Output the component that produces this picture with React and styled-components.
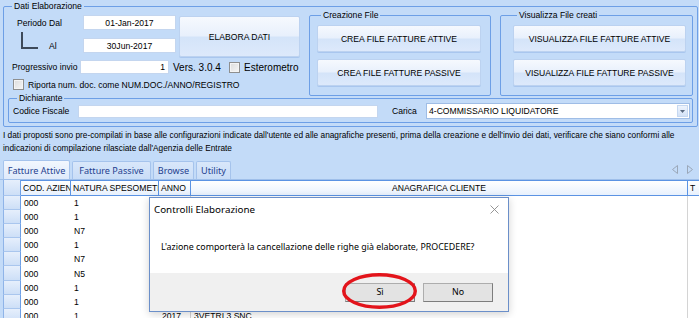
import React from "react";
import styled, { createGlobalStyle } from "styled-components";

const GlobalStyle = createGlobalStyle`
  html, body {
    margin: 0;
    padding: 0;
    background: #c3dbf8;
  }
  * {
    box-sizing: border-box;
  }
`;

const Screen = styled.div`
  position: relative;
  width: 699px;
  height: 318px;
  overflow: hidden;
  background: #c3dbf8;
  font-family: "Liberation Sans", Arial, sans-serif;
  font-size: 8.6px;
  color: #000;
  display: flex;
  flex-direction: column;
`;

const Group = styled.fieldset`
  margin: ${({ $margin }) => $margin || 0};
  padding: ${({ $pad }) => $pad || 0};
  border: 1px solid #6d9fe6;
  border-radius: 2px;
  min-width: 0;
  width: ${({ $width }) => ($width ? `${$width}px` : "auto")};
  flex: ${({ $grow }) => ($grow ? 1 : "none")};
`;

const Legend = styled.legend`
  margin-left: 4px;
  padding: 0 2px;
  font-size: 8.6px;
  line-height: ${({ $lh }) => $lh || 9}px;
`;

const TopRow = styled.div`
  display: flex;
  align-items: flex-start;
`;

const LeftPane = styled.div`
  width: 301px;
  padding-top: 4px;
  display: flex;
  flex-direction: column;
`;

const PeriodGrid = styled.div`
  display: grid;
  grid-template-columns: 72px 93px 121px;
  grid-template-rows: 15px 15px;
  column-gap: 3px;
  row-gap: 8px;
`;

const FieldLabel = styled.div`
  display: flex;
  align-items: ${({ $align }) => $align || "center"};
  padding-left: ${({ $indent }) => $indent || 0}px;
  width: ${({ $width }) => ($width ? `${$width}px` : "auto")};
  flex: none;
  white-space: nowrap;
`;

const Elbow = styled.div`
  width: 17px;
  height: 17px;
  margin-left: 13px;
  margin-bottom: 4px;
  border-left: 2px solid #3e4a5a;
  border-bottom: 2px solid #3e4a5a;
  flex: none;
`;

const AlText = styled.span`
  align-self: center;
  margin-left: 11px;
`;

const TextBox = styled.div`
  height: ${({ $h }) => $h || 15}px;
  width: ${({ $width }) => ($width ? `${$width}px` : "auto")};
  flex: ${({ $grow }) => ($grow ? 1 : "none")};
  background: #fff;
  border: 1px solid #c4d6ef;
  display: flex;
  align-items: center;
  justify-content: ${({ $justify }) => $justify || "center"};
  padding: 0 3px;
  white-space: nowrap;
  overflow: hidden;
`;

const BlueButton = styled.div`
  display: flex;
  align-items: center;
  justify-content: center;
  height: ${({ $h }) => $h}px;
  border: 1px solid #bcd2f0;
  border-radius: 2px;
  background: linear-gradient(
    to bottom,
    #f6f9fe 0%,
    #e8f0fc 48%,
    #d4e4f9 52%,
    #dde9fb 100%
  );
  box-shadow: 0 1px 0 rgba(120, 160, 220, 0.35);
  white-space: nowrap;
  font-size: 8.6px;
`;

const ElaboraButton = styled(BlueButton)`
  grid-column: 3;
  grid-row: 1 / span 2;
  align-self: start;
  margin-top: 1px;
`;

const Line = styled.div`
  display: flex;
  align-items: center;
  height: ${({ $h }) => $h}px;
  margin-top: ${({ $top }) => $top || 0}px;
  padding-left: ${({ $indent }) => $indent || 0}px;
`;

const BigText = styled.span`
  font-size: 10px;
  margin-left: ${({ $left }) => $left || 0}px;
  width: ${({ $width }) => ($width ? `${$width}px` : "auto")};
  white-space: nowrap;
  flex: none;
`;

const Check = styled.span`
  display: inline-block;
  width: 11px;
  height: 11px;
  flex: none;
  border: 1px solid #8e8f8f;
  background: linear-gradient(to bottom right, #dcdcdc, #f6f6f6);
  box-shadow: inset 0 0 0 1px #f4f4f4;
`;

const CheckText = styled.span`
  margin-left: 4px;
  white-space: nowrap;
`;

const ButtonStack = styled.div`
  display: flex;
  flex-direction: column;
  gap: 7px;
`;

const DichRow = styled.div`
  display: flex;
  align-items: center;
  height: 16px;
`;

const Select = styled.div`
  flex: 1;
  height: 16px;
  background: #fff;
  border: 1px solid #9fbde6;
  display: flex;
  align-items: center;
  padding-left: 2px;
  white-space: nowrap;
`;

const SelectValue = styled.span`
  flex: 1;
`;

const DropButton = styled.span`
  width: 11px;
  height: 12px;
  margin-right: 1px;
  display: flex;
  align-items: center;
  justify-content: center;
  background: linear-gradient(to bottom, #eef4fd, #d3e2f7);
  border: 1px solid #c6d8f1;
`;

const Info = styled.div`
  margin: 2px 0 0 3px;
  line-height: 12.5px;
  font-size: 8.3px;
  white-space: nowrap;
`;

const TabStrip = styled.div`
  margin-top: 5px;
  height: 21px;
  display: flex;
  align-items: flex-end;
  padding-left: 3px;
  border-bottom: 1px solid #9fbfea;
`;

const Tab = styled.div`
  height: ${({ $active }) => ($active ? 19 : 18)}px;
  width: ${({ $width }) => $width}px;
  margin-right: 2px;
  display: flex;
  align-items: center;
  justify-content: center;
  font-family: "Noto Sans", "Open Sans", sans-serif;
  font-size: 9.1px;
  color: #1f3f8f;
  border: 1px solid #a5c3ec;
  border-bottom: none;
  border-radius: 2px 2px 0 0;
  background: ${({ $active }) =>
    $active
      ? "linear-gradient(to bottom, #f2f7fe, #dfeafb)"
      : "linear-gradient(to bottom, #d9e7fa, #c9ddf7)"};
  white-space: nowrap;
`;

const TabArrows = styled.div`
  margin-left: auto;
  align-self: center;
  display: flex;
  gap: 9px;
  padding-right: 6px;
  padding-top: 1px;
`;

const Table = styled.div`
  flex: 1;
  margin-left: 3px;
  overflow: hidden;
  background: #fff;
  display: flex;
  flex-direction: column;
`;

const Row = styled.div`
  display: flex;
  height: ${({ $h }) => $h}px;
  flex: none;
`;

const HeadCell = styled.div`
  width: ${({ $w }) => $w}px;
  flex: none;
  display: flex;
  align-items: center;
  justify-content: ${({ $center }) => ($center ? "center" : "flex-start")};
  padding-left: ${({ $center }) => ($center ? 0 : 2)}px;
  border-top: 1px solid #5b93e3;
  border-right: 1px solid #5b93e3;
  border-bottom: 1px solid #5b93e3;
  background: linear-gradient(to bottom, #ffffff, #e8f1fd);
  white-space: nowrap;
  overflow: hidden;
`;

const RowHead = styled.div`
  width: ${({ $w }) => $w}px;
  flex: none;
  border-left: 1px solid #8fb4e8;
  border-right: 1px solid #6d9fe6;
  border-bottom: 1px solid #a9c6ee;
  background: linear-gradient(to bottom, #e6effc, #cddff7);
`;

const Cell = styled.div`
  width: ${({ $w }) => $w}px;
  flex: none;
  display: flex;
  align-items: center;
  padding-left: 3px;
  white-space: nowrap;
  overflow: hidden;
  border-right: 1px solid ${({ $line }) => ($line ? "#d4d4d4" : "transparent")};
`;

const Dialog = styled.div`
  position: absolute;
  left: 149px;
  top: 197px;
  width: 360px;
  height: 115px;
  background: #fff;
  border: 1px solid #6b8fc9;
  box-shadow: 0 2px 8px rgba(0, 0, 0, 0.18);
  display: flex;
  flex-direction: column;
  font-family: "Noto Sans", "Open Sans", sans-serif;
  font-size: 8.85px;
  color: #000;
`;

const DialogTitle = styled.div`
  height: 22px;
  display: flex;
  align-items: center;
  justify-content: space-between;
  padding: 0 9px 0 4px;
  font-size: 9.8px;
`;

const DialogBody = styled.div`
  flex: 1;
  display: flex;
  align-items: center;
  padding-left: 11px;
  white-space: nowrap;
`;

const DialogFooter = styled.div`
  height: 38px;
  background: #f0f0f0;
  display: flex;
  align-items: center;
  justify-content: flex-end;
  gap: 8px;
  padding-right: 15px;
`;

const DialogButton = styled.div`
  width: 70px;
  height: 19px;
  display: flex;
  align-items: center;
  justify-content: center;
  background: #e3e3e3;
  border: 1px solid #adadad;
  border-right-color: #7d7d7d;
  border-bottom-color: #7d7d7d;
`;

const Annotation = styled.svg`
  position: absolute;
  left: 340px;
  top: 271px;
  overflow: visible;
`;

const COLS = [
  { key: "rh", w: 18 },
  { key: "cod", w: 50, title: "COD. AZIENDA" },
  { key: "nat", w: 88, title: "NATURA SPESOMETRO" },
  { key: "anno", w: 32, title: "ANNO", line: true },
  { key: "ana", w: 497, title: "ANAGRAFICA CLIENTE", center: true, line: true },
  { key: "t", w: 30, title: "T" },
];

// ANNO / ANAGRAFICA of the first rows sit under the dialog
const ROWS = [
  ["000", "1", "", ""],
  ["000", "1", "", ""],
  ["000", "N7", "", ""],
  ["000", "1", "", ""],
  ["000", "N7", "", ""],
  ["000", "N5", "", ""],
  ["000", "1", "", ""],
  ["000", "1", "", ""],
  ["000", "1", "2017", "3VETRI 3 SNC"],
];

const TABS = [
  { label: "Fatture Attive", width: 67, active: true },
  { label: "Fatture Passive", width: 79 },
  { label: "Browse", width: 41 },
  { label: "Utility", width: 35 },
];

const App = () => {
  return (
    <Screen>
      <GlobalStyle />

      <Group $margin="1px 1px 0 3px" $pad="0 4px 3px 4px">
        <Legend $lh={10}>Dati Elaborazione</Legend>
        <TopRow>
          <LeftPane>
            <PeriodGrid>
              <FieldLabel $indent={9}>Periodo Dal</FieldLabel>
              <TextBox>01-Jan-2017</TextBox>
              <ElaboraButton $h={41}>ELABORA DATI</ElaboraButton>
              <FieldLabel $align="flex-end">
                <Elbow />
                <AlText>Al</AlText>
              </FieldLabel>
              <TextBox>30Jun-2017</TextBox>
            </PeriodGrid>

            <Line $h={14} $top={7}>
              <FieldLabel $width={72} $indent={4}>
                Progressivo invio
              </FieldLabel>
              <TextBox $width={89} $h={14} $justify="flex-end">
                1
              </TextBox>
              <BigText $left={4} $width={56}>
                Vers. 3.0.4
              </BigText>
              <Check />
              <BigText $left={4}>Esterometro</BigText>
            </Line>

            <Line $h={11} $top={5} $indent={5}>
              <Check />
              <CheckText>Riporta num. doc. come NUM.DOC./ANNO/REGISTRO</CheckText>
            </Line>
          </LeftPane>

          <Group $width={182} $pad="5px 9px 9px 7px">
            <Legend>Creazione File</Legend>
            <ButtonStack>
              <BlueButton $h={27}>CREA FILE FATTURE ATTIVE</BlueButton>
              <BlueButton $h={27}>CREA FILE FATTURE PASSIVE</BlueButton>
            </ButtonStack>
          </Group>

          <Group $grow $margin="0 0 0 9px" $pad="5px 6px 9px 12px">
            <Legend>Visualizza File creati</Legend>
            <ButtonStack>
              <BlueButton $h={27}>VISUALIZZA FILE FATTURE ATTIVE</BlueButton>
              <BlueButton $h={27}>VISUALIZZA FILE FATTURE PASSIVE</BlueButton>
            </ButtonStack>
          </Group>
        </TopRow>

        <Group $margin="-2px 0 0 0" $pad="0 2px 3px 4px">
          <Legend>Dichiarante</Legend>
          <DichRow>
            <FieldLabel $width={65}>Codice Fiscale</FieldLabel>
            <TextBox $width={300} $h={13} />
            <FieldLabel $width={48} $indent={14}>
              Carica
            </FieldLabel>
            <Select>
              <SelectValue>4-COMMISSARIO LIQUIDATORE</SelectValue>
              <DropButton>
                <svg width="5" height="3" viewBox="0 0 5 3">
                  <polygon points="0,0 5,0 2.5,3" fill="#5a6a80" />
                </svg>
              </DropButton>
            </Select>
          </DichRow>
        </Group>
      </Group>

      <Info>
        I dati proposti sono pre-compilati in base alle configurazioni indicate
        dall'utente ed alle anagrafiche presenti, prima della creazione e
        dell'invio dei dati, verificare che siano conformi alle
        <br />
        indicazioni di compilazione rilasciate dall'Agenzia delle Entrate
      </Info>

      <TabStrip>
        {TABS.map((t) => (
          <Tab key={t.label} $width={t.width} $active={t.active}>
            {t.label}
          </Tab>
        ))}
        <TabArrows>
          <svg width="6" height="9" viewBox="0 0 6 9">
            <polygon
              points="5.5,0.5 5.5,8.5 0.5,4.5"
              fill="none"
              stroke="#9aa7b8"
              strokeWidth="1"
            />
          </svg>
          <svg width="6" height="9" viewBox="0 0 6 9">
            <polygon
              points="0.5,0.5 0.5,8.5 5.5,4.5"
              fill="none"
              stroke="#9aa7b8"
              strokeWidth="1"
            />
          </svg>
        </TabArrows>
      </TabStrip>

      <Table>
        <Row $h={16}>
          {COLS.map((c) =>
            c.key === "rh" ? (
              <RowHead key={c.key} $w={c.w} />
            ) : (
              <HeadCell key={c.key} $w={c.w} $center={c.center}>
                {c.title}
              </HeadCell>
            )
          )}
        </Row>
        {ROWS.map((r, i) => (
          <Row key={i} $h={14.1}>
            <RowHead $w={COLS[0].w} />
            {r.map((v, j) => (
              <Cell key={j} $w={COLS[j + 1].w} $line={COLS[j + 1].line}>
                {v}
              </Cell>
            ))}
            <Cell $w={COLS[5].w} />
          </Row>
        ))}
      </Table>

      <Dialog>
        <DialogTitle>
          <span>Controlli Elaborazione</span>
          <svg width="9" height="9" viewBox="0 0 9 9">
            <path d="M0.5 0.5 L8.5 8.5 M8.5 0.5 L0.5 8.5" stroke="#8a8a8a" strokeWidth="0.9" />
          </svg>
        </DialogTitle>
        <DialogBody>
          L'azione comporterà la cancellazione delle righe già elaborate,
          PROCEDERE?
        </DialogBody>
        <DialogFooter>
          <DialogButton>Sì</DialogButton>
          <DialogButton>No</DialogButton>
        </DialogFooter>
      </Dialog>

      <Annotation width="80" height="40" viewBox="0 0 80 40">
        <ellipse
          cx="39.5"
          cy="20"
          rx="35.8"
          ry="16.3"
          fill="none"
          stroke="#e3141b"
          strokeWidth="3.4"
        />
      </Annotation>
    </Screen>
  );
};

export default App;
